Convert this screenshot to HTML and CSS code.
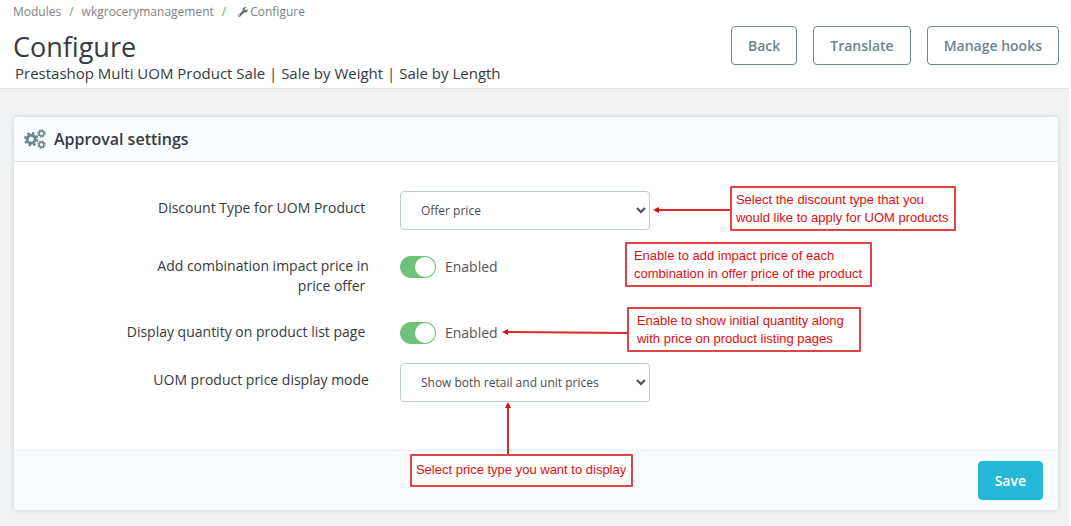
FILE: index.html
```html
<!DOCTYPE html>
<html lang="en">
<head>
    <meta charset="UTF-8" />
    <meta name="viewport" content="width=device-width, initial-scale=1.0" />
    <title>Configure</title>
    <link rel="stylesheet" href="styles.css">
</head>
<body>
    <header class="page-head">
        <div class="page-info">
            <nav class="breadcrumb">
                <a href="#">Modules</a>
                <span class="slash">/</span>
                <a href="#">wkgrocerymanagement</a>
                <span class="slash">/</span>
                <a href="#" class="current">
                    <svg class="wrench" viewBox="0 0 16 16"><path d="M15.6 3.4 12.9 5 11 3.9V1.8L13.600.300C11-.6 7.500.800 7.200 4.200c0 .7.100 1.200.300 1.800L.8 12.200c-1.900 2 .8 4.900 2.900 2.900L10 8.600c3.400 1.300 6.500-1.600 5.600-5.200zM2.300 12.800a.8.8 0 1 1 0 1.600.8.8 0 0 1 0-1.600z"/></svg>
                    Configure
                </a>
            </nav>
            <h1>Configure</h1>
            <p class="subtitle">Prestashop Multi UOM Product Sale | Sale by Weight | Sale by Length</p>
        </div>
        <div class="toolbar">
            <button type="button" class="btn">Back</button>
            <button type="button" class="btn">Translate</button>
            <button type="button" class="btn">Manage hooks</button>
        </div>
    </header>

    <main>
        <form class="panel">
            <div class="panel-heading">
                <svg class="cogs" viewBox="0 0 22 20" fill="none">
                    <circle cx="7.200" cy="10.200" r="4" stroke-width="3"/>
                    <circle cx="7.200" cy="10.200" r="6.200" stroke-width="2" stroke-dasharray="2.600 2.269"/>
                    <circle cx="17.500" cy="4.500" r="2.400" stroke-width="1.500"/>
                    <circle cx="17.500" cy="4.500" r="3.600" stroke-width="1.300" stroke-dasharray="1.600 1.227"/>
                    <circle cx="17.500" cy="15.700" r="2.400" stroke-width="1.500"/>
                    <circle cx="17.500" cy="15.700" r="3.600" stroke-width="1.300" stroke-dasharray="1.600 1.227"/>
                </svg>
                <h2>Approval settings</h2>
            </div>

            <div class="panel-body">
                <div class="form-row">
                    <label class="row-label" for="discount">Discount Type for UOM Product&nbsp;</label>
                    <div class="field">
                        <select id="discount">
                            <option>Offer price</option>
                            <option>Discount</option>
                        </select>
                        <svg class="arrow arrow-discount" viewBox="0 0 78 8"><path class="line" d="M5 4H78"/><path class="head" d="M0 4l6-3v6z"/></svg>
                        <div class="note note-discount">Select the discount type that you<br>would like to apply for UOM products</div>
                    </div>
                </div>

                <div class="form-row">
                    <label class="row-label" for="impact">Add combination impact price in price offer&nbsp;</label>
                    <div class="field">
                        <label class="switch"><input type="checkbox" id="impact" checked>Enabled</label>
                        <div class="note note-impact">Enable to add impact price of each<br>combination in offer price of the product</div>
                    </div>
                </div>

                <div class="form-row">
                    <label class="row-label" for="quantity">Display quantity on product list page&nbsp;</label>
                    <div class="field">
                        <label class="switch"><input type="checkbox" id="quantity" checked>Enabled</label>
                        <svg class="arrow arrow-quantity" viewBox="0 0 126 8"><path class="line" d="M5 4L126 5"/><path class="head" d="M0 4l6-3v6z"/></svg>
                        <div class="note note-quantity">Enable to show initial quantity along<br>with price on product listing pages</div>
                    </div>
                </div>

                <div class="form-row">
                    <label class="row-label" for="mode">UOM product price display mode</label>
                    <div class="field">
                        <select id="mode">
                            <option>Show both retail and unit prices</option>
                            <option>Show only unit price</option>
                        </select>
                        <svg class="arrow arrow-mode" viewBox="0 0 8 54"><path class="line" d="M4 5V54"/><path class="head" d="M4 0l3 6H1z"/></svg>
                        <div class="note note-mode">Select price type you want to display</div>
                    </div>
                </div>
            </div>

            <div class="panel-footer">
                <button type="submit" class="btn btn-primary">Save</button>
            </div>
        </form>
    </main>
</body>
</html>
```
FILE: styles.css
```css
* {
    margin: 0;
    padding: 0;
    box-sizing: border-box;
}

body {
    font-family: "Open Sans", "Noto Sans", sans-serif;
    font-size: 14px;
    line-height: 20px;
    color: #363a41;
    background: #eff1f2;
    min-height: 100vh;
    border-right: 2px solid #fafbfb;
}

/* Header */

.page-head {
    display: flex;
    justify-content: space-between;
    align-items: flex-start;
    background: #ffffff;
    border-bottom: 1px solid #dfe1e2;
    padding: 2px 10px 5px 13px;
}

.breadcrumb {
    display: flex;
    gap: 8px;
    font-size: 12px;
}

.breadcrumb a {
    color: #808285;
    text-decoration: none;
}

.breadcrumb .slash {
    color: #72a84e;
}

.breadcrumb .current {
    display: flex;
    align-items: center;
    gap: 2px;
    margin-left: 4px;
}

.wrench {
    width: 10px;
    height: 10px;
    fill: #6c7073;
}

h1 {
    padding-top: 9px;
    font-size: 27px;
    font-weight: 400;
    line-height: 32px;
}

.subtitle {
    font-size: 15px;
    padding-left: 2px;
}

.toolbar {
    display: flex;
    gap: 16px;
    padding-top: 24px;
}

.btn {
    height: 39px;
    padding: 0 16px;
    font: inherit;
    font-weight: 600;
    color: #6c868e;
    background: #ffffff;
    border: 1px solid #6c868e;
    border-radius: 4px;
    cursor: pointer;
}

.btn-primary {
    color: #ffffff;
    background: #25b9d7;
    border-color: #25b9d7;
}

/* Settings panel */

main {
    padding: 28px 11px 16px 14px;
}

.panel {
    background: #ffffff;
    border-radius: 4px;
    box-shadow: 0 0 4px rgba(54, 58, 65, 0.2);
}

.panel-heading {
    display: flex;
    align-items: center;
    gap: 8px;
    height: 45px;
    padding-left: 10px;
    background: #fafdff;
    border-bottom: 1px solid #dce1e3;
    border-radius: 4px 4px 0 0;
}

.panel-heading h2 {
    font-size: 16px;
    font-weight: 600;
}

.cogs {
    width: 22px;
    height: 20px;
    stroke: #6c868e;
}

.panel-body {
    padding: 29px 0;
}

.form-row {
    display: grid;
    grid-template-columns: 34% 1fr;
    gap: 31px;
    margin-bottom: 19px;
}

.row-label {
    justify-self: end;
    max-width: 245px;
    padding-top: 7px;
    text-align: right;
}

.field {
    position: relative;
}

select {
    display: block;
    width: 250px;
    height: 39px;
    padding: 0 0 0 16px;
    font: inherit;
    font-size: 12px;
    color: #4a4d52;
    background: #ffffff;
    border: 1px solid #bbcdd2;
    border-radius: 4px;
}

.switch {
    display: flex;
    align-items: center;
    gap: 9px;
    height: 22px;
    margin-top: 7px;
    color: #54575c;
}

.switch input {
    appearance: none;
    width: 36px;
    height: 22px;
    padding: 1px;
    background: #70c17a;
    border-radius: 11px;
}

.switch input::before {
    content: "";
    display: block;
    width: 20px;
    height: 20px;
    background: #ffffff;
    border-radius: 50%;
}

.switch input:checked::before {
    margin-left: 14px;
}

.panel-footer {
    display: flex;
    justify-content: flex-end;
    padding: 10px 15px;
    background: #fafdff;
    border-top: 1px solid #eaedef;
    border-radius: 0 0 4px 4px;
}

/* Help notes laid over the form */

.note {
    position: absolute;
    padding: 3px 4px 2px;
    font-family: "Liberation Sans", Arial, sans-serif;
    font-size: 13px;
    line-height: 18px;
    white-space: nowrap;
    color: #e00f0f;
    background: #ffffff;
    border: 2px solid #e04444;
    border-radius: 1px;
}

.note-discount {
    left: 330px;
    top: -5px;
    width: 226px;
}

.note-impact {
    left: 225px;
    top: -7px;
    width: 247px;
    padding-left: 7px;
}

.note-quantity {
    left: 227px;
    top: -8px;
    width: 234px;
    padding-left: 8px;
}

.note-mode {
    left: 10px;
    top: 91px;
    width: 223px;
    padding: 5px 4px 6px;
}

.arrow {
    position: absolute;
}

.arrow .line {
    fill: none;
    stroke: #dc2a2a;
    stroke-width: 2;
}

.arrow .head {
    fill: #d81010;
}

.arrow-discount {
    left: 253px;
    top: 15px;
    width: 78px;
    height: 8px;
}

.arrow-quantity {
    left: 102px;
    top: 13px;
    width: 126px;
    height: 8px;
}

.arrow-mode {
    left: 104px;
    top: 39px;
    width: 8px;
    height: 54px;
}
```
